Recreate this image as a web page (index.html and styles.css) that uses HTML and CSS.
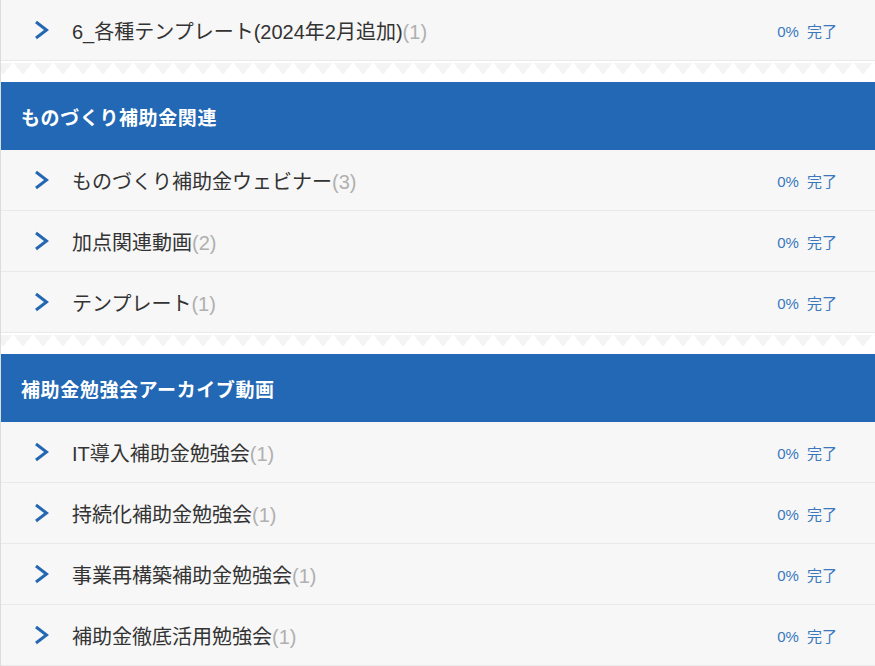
FILE: index.html
```html
<!DOCTYPE html>
<html lang="ja">
<head>
<meta charset="utf-8">
<link rel="stylesheet" href="styles.css">
</head>
<body>
<div class="list">
  <div class="row">
    <svg class="chev" viewBox="0 0 15 20" width="15" height="20"><polyline points="2,2 12.5,10 2,18"/></svg>
    <span class="title">6_各種テンプレート(2024年2月追加)<span class="count">(1)</span></span>
    <span class="progress">0% 完了</span>
  </div>
  <div class="sep"></div>
  <div class="header">ものづくり補助金関連</div>
  <div class="row">
    <svg class="chev" viewBox="0 0 15 20" width="15" height="20"><polyline points="2,2 12.5,10 2,18"/></svg>
    <span class="title">ものづくり補助金ウェビナー<span class="count">(3)</span></span>
    <span class="progress">0% 完了</span>
  </div>
  <div class="row">
    <svg class="chev" viewBox="0 0 15 20" width="15" height="20"><polyline points="2,2 12.5,10 2,18"/></svg>
    <span class="title">加点関連動画<span class="count">(2)</span></span>
    <span class="progress">0% 完了</span>
  </div>
  <div class="row">
    <svg class="chev" viewBox="0 0 15 20" width="15" height="20"><polyline points="2,2 12.5,10 2,18"/></svg>
    <span class="title">テンプレート<span class="count">(1)</span></span>
    <span class="progress">0% 完了</span>
  </div>
  <div class="sep"></div>
  <div class="header">補助金勉強会アーカイブ動画</div>
  <div class="row">
    <svg class="chev" viewBox="0 0 15 20" width="15" height="20"><polyline points="2,2 12.5,10 2,18"/></svg>
    <span class="title">IT導入補助金勉強会<span class="count">(1)</span></span>
    <span class="progress">0% 完了</span>
  </div>
  <div class="row">
    <svg class="chev" viewBox="0 0 15 20" width="15" height="20"><polyline points="2,2 12.5,10 2,18"/></svg>
    <span class="title">持続化補助金勉強会<span class="count">(1)</span></span>
    <span class="progress">0% 完了</span>
  </div>
  <div class="row">
    <svg class="chev" viewBox="0 0 15 20" width="15" height="20"><polyline points="2,2 12.5,10 2,18"/></svg>
    <span class="title">事業再構築補助金勉強会<span class="count">(1)</span></span>
    <span class="progress">0% 完了</span>
  </div>
  <div class="row">
    <svg class="chev" viewBox="0 0 15 20" width="15" height="20"><polyline points="2,2 12.5,10 2,18"/></svg>
    <span class="title">補助金徹底活用勉強会<span class="count">(1)</span></span>
    <span class="progress">0% 完了</span>
  </div>
</div>
</body>
</html>
```
FILE: styles.css
```css
html, body {
  margin: 0;
  padding: 0;
  background: #ffffff;
}
body {
  font-family: "Liberation Sans", "Noto Sans CJK JP", sans-serif;
  overflow: hidden;
}
.list {
  display: flex;
  flex-direction: column;
  border-left: 1px solid #dcdcdc;
}
.row {
  display: flex;
  align-items: center;
  height: 60px;
  border-bottom: 1px solid #e9e9e9;
  background: #f7f7f7;
  padding: 0 38px 0 33px;
}
.chev {
  flex: none;
  margin-right: 23px;
  fill: none;
  stroke: #2467b2;
  stroke-width: 3;
  stroke-linejoin: miter;
}
.title {
  flex: 1;
  font-size: 20px;
  color: #333333;
  white-space: nowrap;
}
.count {
  color: #b0b0b0;
}
.progress {
  font-size: 15px;
  color: #3a78bd;
  white-space: nowrap;
  word-spacing: 4px;
}
.sep {
  height: 21px;
  background-color: #ffffff;
  background-image: conic-gradient(from -37.6deg at 50% 100%, #f4f4f4 0deg 75.2deg, transparent 75.2deg);
  background-size: 20px 12px;
  background-repeat: repeat-x;
  background-position: 12px 2px;
}
.header {
  height: 68px;
  display: flex;
  align-items: center;
  padding-left: 20px;
  background: #2268b4;
  color: #ffffff;
  font-size: 19px;
  font-weight: bold;
  letter-spacing: 0.6px;
}
```
